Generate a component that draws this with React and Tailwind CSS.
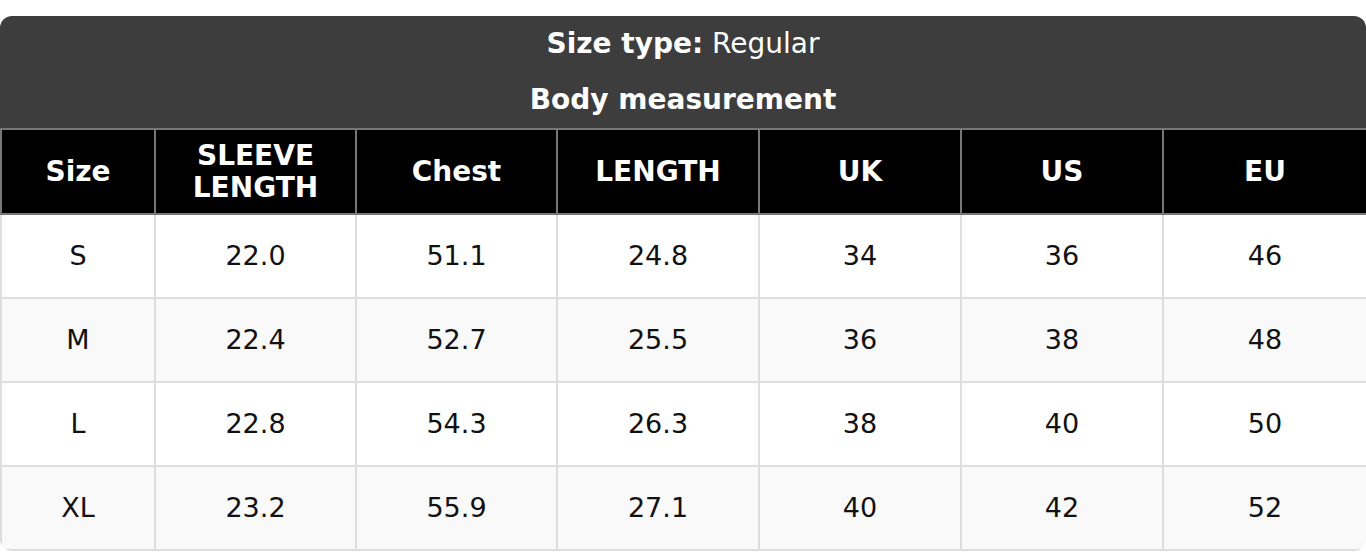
import React from "react";

const cols = ["Size", "SLEEVE LENGTH", "Chest", "LENGTH", "UK", "US", "EU"];
const widths = ["w-[154px]", "w-[201px]", "w-[201px]", "w-[202px]", "w-[202px]", "w-[202px]", "w-[204px]"];
const rows = [
  ["S", "22.0", "51.1", "24.8", "34", "36", "46"],
  ["M", "22.4", "52.7", "25.5", "36", "38", "48"],
  ["L", "22.8", "54.3", "26.3", "38", "40", "50"],
  ["XL", "23.2", "55.9", "27.1", "40", "42", "52"],
];

export default function App() {
  return (
    <div className="bg-white w-[1366px] h-[552px] pt-4 overflow-hidden" style={{ fontFamily: '"DejaVu Sans", sans-serif' }}>
      <div className="rounded-xl overflow-hidden bg-white">
        <div className="bg-[#3d3d3d] text-white text-center h-[112px] flex flex-col">
          <div className="h-[56px] flex items-center justify-center text-[28px] leading-none">
            <span><span className="font-bold">Size type:</span> Regular</span>
          </div>
          <div className="h-[56px] flex items-center justify-center text-[28px] font-bold leading-none">
            Body measurement
          </div>
        </div>
        <table className="w-full border-collapse table-fixed">
          <colgroup>
            {widths.map((w, i) => (
              <col key={i} className={w} />
            ))}
          </colgroup>
          <thead>
            <tr>
              {cols.map((c, i) => (
                <th
                  key={i}
                  className="bg-black text-white font-bold text-[28px] leading-[32px] h-[85px] border-2 border-[#777] text-center align-middle p-0"
                >
                  {c === "SLEEVE LENGTH" ? (
                    <>
                      SLEEVE
                      <br />
                      LENGTH
                    </>
                  ) : (
                    c
                  )}
                </th>
              ))}
            </tr>
          </thead>
          <tbody>
            {rows.map((r, ri) => (
              <tr key={ri} className={ri % 2 === 1 ? "bg-[#f9f9f9]" : "bg-white"}>
                {r.map((v, ci) => (
                  <td
                    key={ci}
                    className="h-[84px] border-2 border-[#dddddd] text-center align-middle text-[27px] text-[#111] p-0"
                  >
                    {v}
                  </td>
                ))}
              </tr>
            ))}
          </tbody>
        </table>
      </div>
    </div>
  );
}
